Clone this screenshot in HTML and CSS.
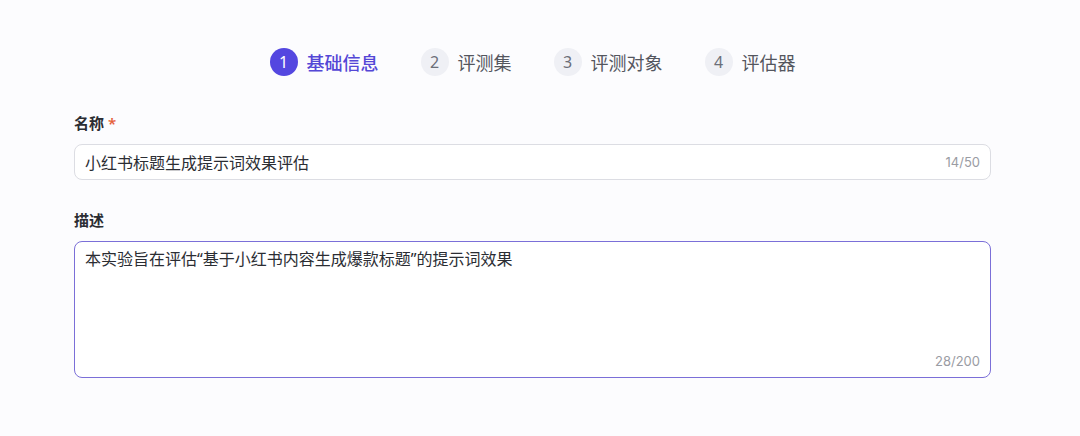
FILE: index.html
```html
<!DOCTYPE html>
<html lang="zh-CN">
<head>
    <meta charset="UTF-8">
    <meta name="viewport" content="width=device-width, initial-scale=1.0">
    <title>新建实验</title>
    <link rel="stylesheet" href="styles.css">
</head>
<body>
<div class="container">
    <!-- 步骤条 -->
    <div class="steps">
        <div class="step active"><span class="num">1</span><span class="title">基础信息</span></div>
        <div class="step"><span class="num">2</span><span class="title">评测集</span></div>
        <div class="step"><span class="num">3</span><span class="title">评测对象</span></div>
        <div class="step"><span class="num">4</span><span class="title">评估器</span></div>
    </div>

    <div class="field">
        <label class="label">名称 <span class="required">*</span></label>
        <div class="input">
            <span class="value">小红书标题生成提示词效果评估</span>
            <span class="count">14/50</span>
        </div>
    </div>

    <div class="field">
        <label class="label">描述</label>
        <div class="textarea focused">
            <span class="value">本实验旨在评估“基于小红书内容生成爆款标题”的提示词效果</span>
            <span class="count">28/200</span>
        </div>
    </div>
</div>
</body>
</html>
```

FILE: styles.css
```css
body {
    margin: 0;
    background-color: #fcfcfe;
    font-family: "Noto Sans", "Noto Sans CJK SC", sans-serif;
    color: #1f2329;
}

.container {
    width: 917px;
    margin-left: 74px;
    padding-top: 48px;
}

.steps {
    display: flex;
    justify-content: center;
    gap: 42px;
    margin-bottom: 36px;
}

.step {
    display: flex;
    align-items: center;
    gap: 9px;
    height: 28px;
}

.step .num {
    width: 28px;
    height: 28px;
    border-radius: 50%;
    background-color: #eff0f5;
    color: #6b6e78;
    font-size: 16px;
    display: flex;
    align-items: center;
    justify-content: center;
}

.step .title {
    font-size: 18px;
    color: #54565e;
}

.step.active .num {
    background-color: #5447e0;
    color: #fff;
}

.step.active .title {
    color: #5447d6;
    font-weight: 500;
}

.field {
    margin-bottom: 29px;
}

.label {
    display: block;
    font-size: 15px;
    font-weight: 600;
    line-height: 22px;
    color: #2b2d33;
    margin-bottom: 10px;
}

.required {
    color: #e5603a;
}

.input {
    display: flex;
    align-items: center;
    height: 36px;
    box-sizing: border-box;
    padding: 0 10px;
    border: 1px solid #dcdde3;
    border-radius: 8px;
    background-color: #fff;
}

.value {
    flex: 1;
    font-size: 16px;
    color: #2b2d33;
}

.count {
    font-family: "Inter", "Noto Sans", sans-serif;
    font-size: 13px;
    color: #9a9ca3;
}

.textarea {
    display: flex;
    flex-direction: column;
    height: 137px;
    box-sizing: border-box;
    padding: 5px 10px 8px;
    border: 1px solid #7b6fd8;
    border-radius: 8px;
    background-color: #fff;
}

.textarea .value {
    line-height: 24px;
}

.textarea .count {
    align-self: flex-end;
}
```
